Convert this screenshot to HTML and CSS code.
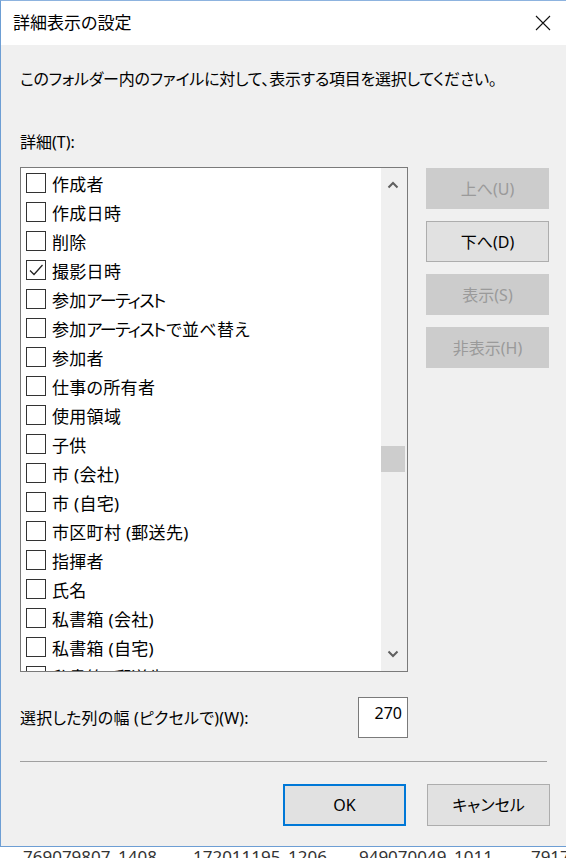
FILE: index.html
```html
<!DOCTYPE html>
<html lang="ja">
<head>
<meta charset="utf-8">
<title>詳細表示の設定</title>
<link rel="stylesheet" href="styles.css">
</head>
<body>
<div class="window">
  <div class="titlebar">
    <span class="title">詳細表示の設定</span>
    <svg class="close" width="16" height="16" viewBox="0 0 16 16"><path d="M1 1 L15 15 M15 1 L1 15" stroke="#111" stroke-width="1.1" fill="none"/></svg>
  </div>
  <div class="content">
    <p class="desc">このフォルダー内のファイルに対して、表示する項目を選択してください。</p>
    <p class="label">詳細(T):</p>
    <div class="main">
      <div class="listbox">
        <div class="items">
          <div class="item"><span class="cb"></span><span>作成者</span></div>
          <div class="item"><span class="cb"></span><span>作成日時</span></div>
          <div class="item"><span class="cb"></span><span>削除</span></div>
          <div class="item"><span class="cb"><svg width="18" height="18" viewBox="0 0 18 18"><path d="M3 9.5 L7 13.5 L15.5 4" stroke="#222" stroke-width="1.3" fill="none"/></svg></span><span>撮影日時</span></div>
          <div class="item"><span class="cb"></span><span>参加<span class="k">アーティスト</span></span></div>
          <div class="item"><span class="cb"></span><span>参加<span class="k">アーティスト</span>で並べ替え</span></div>
          <div class="item"><span class="cb"></span><span>参加者</span></div>
          <div class="item"><span class="cb"></span><span>仕事の所有者</span></div>
          <div class="item"><span class="cb"></span><span>使用領域</span></div>
          <div class="item"><span class="cb"></span><span>子供</span></div>
          <div class="item"><span class="cb"></span><span>市 (会社)</span></div>
          <div class="item"><span class="cb"></span><span>市 (自宅)</span></div>
          <div class="item"><span class="cb"></span><span>市区町村 (郵送先)</span></div>
          <div class="item"><span class="cb"></span><span>指揮者</span></div>
          <div class="item"><span class="cb"></span><span>氏名</span></div>
          <div class="item"><span class="cb"></span><span>私書箱 (会社)</span></div>
          <div class="item"><span class="cb"></span><span>私書箱 (自宅)</span></div>
          <div class="item"><span class="cb"></span><span>私書箱 (郵送先)</span></div>
        </div>
        <div class="scrollbar">
          <svg class="arrow" width="12" height="8" viewBox="0 0 12 8"><path d="M1.5 6.5 L6 2 L10.5 6.5" stroke="#606060" stroke-width="2" fill="none"/></svg>
          <div class="track"><div class="thumb"></div></div>
          <svg class="arrow" width="12" height="8" viewBox="0 0 12 8"><path d="M1.5 1.5 L6 6 L10.5 1.5" stroke="#606060" stroke-width="2" fill="none"/></svg>
        </div>
      </div>
      <div class="sidebtns">
        <button class="btn disabled">上へ(U)</button>
        <button class="btn">下へ(D)</button>
        <button class="btn disabled">表示(S)</button>
        <button class="btn disabled">非表示(H)</button>
      </div>
    </div>
    <div class="widthrow">
      <span class="wlabel">選択した列の幅 (ピクセルで)(W):</span>
      <div class="input">270</div>
    </div>
    <div class="sep"></div>
    <div class="footer">
      <button class="btn ok">OK</button>
      <button class="btn">キャンセル</button>
    </div>
  </div>
</div>
<div class="under">
  <span class="u1">769079807_1408</span>
  <span class="u2">172011195_1206</span>
  <span class="u3">949070049_1011</span>
  <span class="u4">7917</span>
</div>
</body>
</html>
```
FILE: styles.css
```css
* { box-sizing: border-box; }
html, body { margin: 0; padding: 0; background: #fff; }
body {
  width: 566px; height: 858px; overflow: hidden;
  font-family: "Noto Sans", "Noto Sans CJK JP", sans-serif;
  font-feature-settings: "palt";
  color: #000;
}
.window {
  width: 566px;
  height: 847px;
  border-left: 1px solid #6d9ed4;
  border-top: 1px solid #8db3df;
  border-bottom: 1px solid #6d9ed4;
  background: #f0f0f0;
  display: flex; flex-direction: column;
}
.titlebar {
  height: 44px; background: #fff;
  display: flex; align-items: center;
  padding-left: 12px;
  width: 565px;
  justify-content: space-between;
  padding-right: 15px;
}
.title { font-size: 17px; line-height: 20px; color: #000; }
.close { display: block; margin-top: -1px; }
.content {
  padding-left: 19px;
  width: 565px;
  display: flex; flex-direction: column;
}
.desc { margin: 24px 0 0; font-size: 16px; line-height: 20px; letter-spacing: -0.25px; white-space: nowrap; }
.label { margin: 43px 0 0; font-size: 16px; line-height: 20px; }
.main { margin-top: 15px; display: flex; align-items: flex-start; }
.listbox {
  width: 388px; height: 505px;
  border: 1px solid #7a7a7a;
  background: #fff;
  display: flex;
}
.items {
  flex: 1; overflow: hidden;
  padding: 2px 0 0 5px;
  display: flex; flex-direction: column;
}
.item {
  height: 29px; flex: none;
  display: flex; align-items: center;
  font-size: 17px; line-height: 20px;
  letter-spacing: 0.3px;
  white-space: nowrap;
}
.k { letter-spacing: -1.6px; margin-right: 1.6px; }
.cb {
  width: 20px; height: 20px; flex: none;
  border: 1px solid #333;
  background: #fff;
  margin: 0 6px 4px 0;
  display: flex; align-items: center; justify-content: center;
}
.cb svg { display: block; }
.scrollbar {
  width: 26px; background: #f0f0f0;
  display: flex; flex-direction: column; align-items: center;
  padding-right: 2px;
}
.arrow { display: block; margin: 13px 0 13px; }
.track { flex: 1; width: 100%; position: relative; }
.thumb {
  position: absolute; left: 0; right: 0;
  top: 244px; height: 26px;
  background: #cdcdcd;
}
.sidebtns {
  margin-left: 18px; margin-top: 1px;
  display: flex; flex-direction: column; gap: 12px;
}
.btn {
  font-family: inherit; font-feature-settings: "palt";
  width: 123px; height: 41px;
  font-size: 16px; line-height: 20px;
  background: #e1e1e1;
  border: 1px solid #adadad;
  color: #000;
  padding: 0;
  margin: 0;
}
.btn.disabled { background: #cccccc; border-color: #cccccc; color: #9a9a9a; }
.widthrow {
  margin-top: 25px;
  display: flex; align-items: center;
  width: 388px; justify-content: space-between;
}
.wlabel { font-size: 16px; line-height: 20px; letter-spacing: 0.2px; }
.input {
  width: 50px; height: 41px;
  border: 1px solid #7a7a7a;
  background: #fff;
  font-size: 16px; line-height: 20px;
  text-align: right;
  padding: 5px 5px 0 0;
}
.sep { margin-top: 23px; width: 527px; height: 1px; background: #a0a0a0; }
.footer {
  margin-top: 22px;
  width: 530px;
  display: flex; justify-content: flex-end; gap: 21px;
}
.footer .btn { width: 123px; height: 42px; }
.btn.ok { border: 2px solid #0078d7; }
.under {
  height: 11px; overflow: hidden;
  display: flex;
  font-size: 17px; line-height: 20px; color: #333;
  white-space: nowrap;
}
.under span { display: block; margin-top: 0; flex: none; }
.u1 { margin-left: 23px; }
.u2 { margin-left: 36px; }
.u3 { margin-left: 32px; }
.u4 { margin-left: 38px; }
```
